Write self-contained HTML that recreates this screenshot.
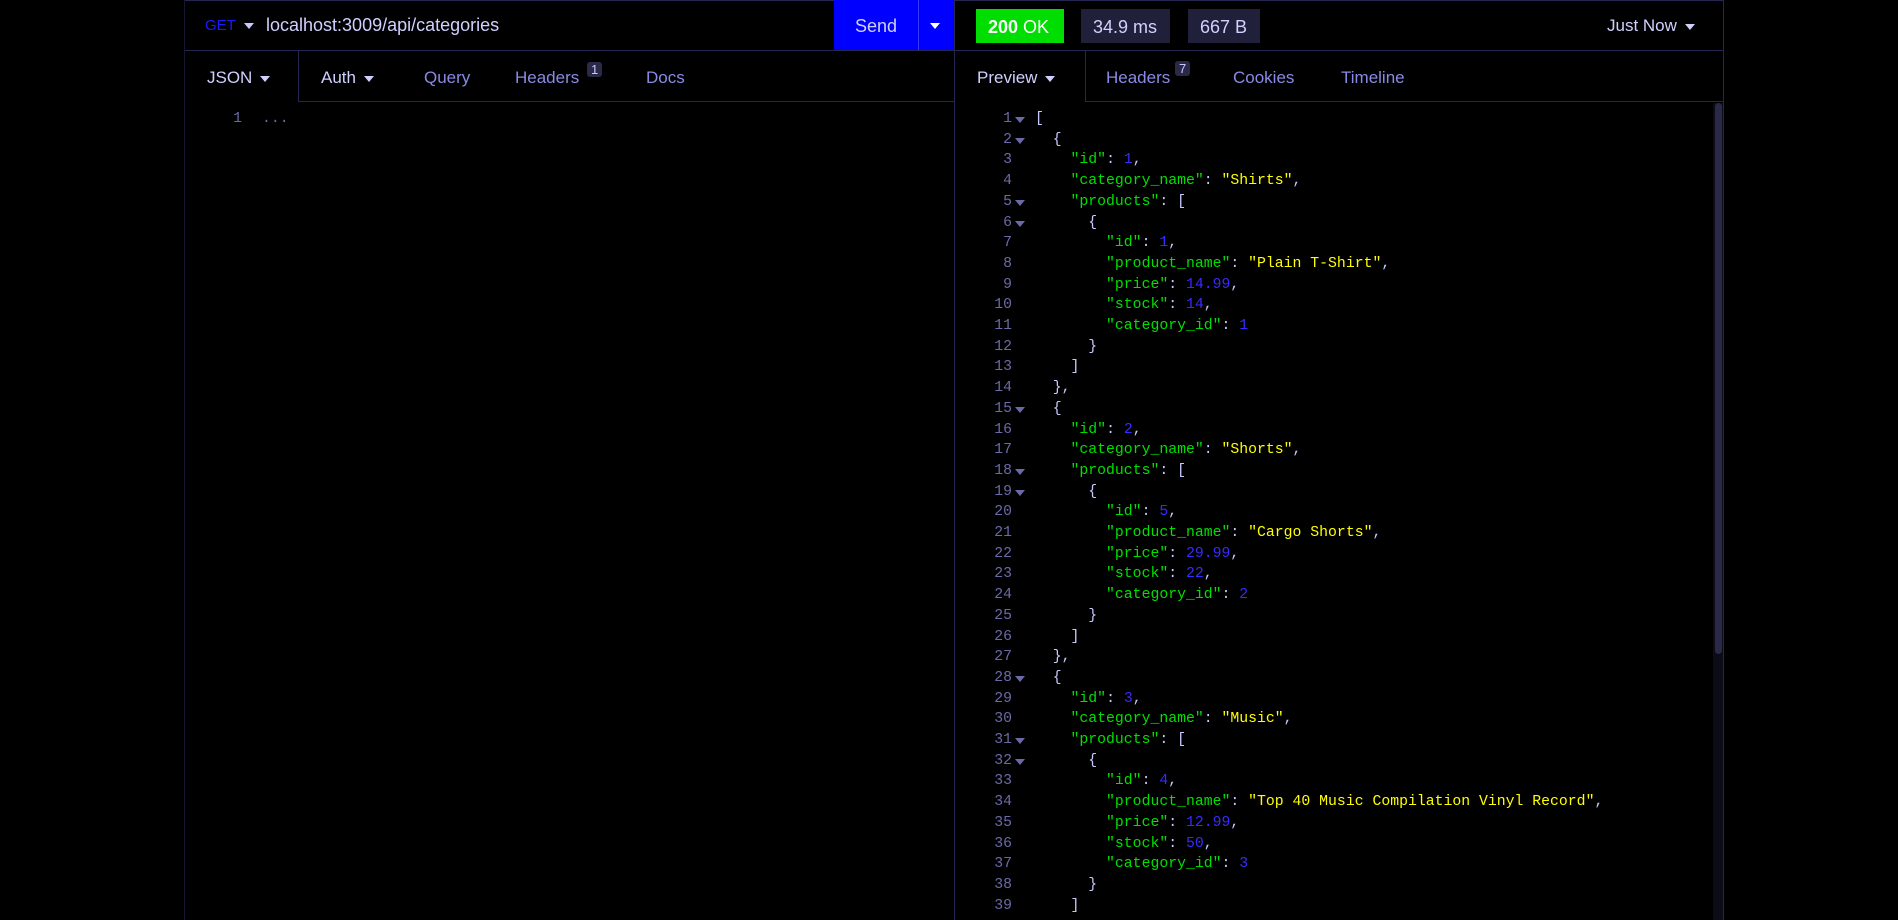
<!DOCTYPE html>
<html><head><meta charset="utf-8"><style>
*{margin:0;padding:0;box-sizing:border-box}
body{width:1898px;height:920px;background:#000;overflow:hidden;position:relative;font-family:"Liberation Sans",sans-serif;color:#c8c8ff}
.a{position:absolute;white-space:nowrap}
.sans{font-size:17px}
.tab{color:#8a8ae6;font-size:17px}
.w{color:#d0d0ff}
.tri{display:inline-block;width:0;height:0;border-left:5px solid transparent;border-right:5px solid transparent;border-top:6px solid currentColor;vertical-align:middle;margin-left:8px}
.ln{position:absolute;left:960px;width:52px;text-align:right;color:#6a6aa8;font-family:"Liberation Mono",monospace;font-size:14.8px}
.ar{position:absolute;left:1015px;width:0;height:0;border-left:5px solid transparent;border-right:5px solid transparent;border-top:6px solid #6a6aa8}
.code{position:absolute;left:1035px;font-family:"Liberation Mono",monospace;font-size:14.8px;color:#c8c8ff;white-space:pre}
.k{color:#00e000}.s{color:#ffff00}.n{color:#3a2aff}
.badge{background:#2a2a48;border-radius:3px;font-size:13px;color:#c8c8ff;padding:0 4px;position:absolute}
</style></head><body>
<div class="a" style="left:184px;top:0;width:1540px;height:1px;background:#262650"></div>
<div class="a" style="left:184px;top:50px;width:1540px;height:1px;background:#262650"></div>
<div class="a" style="left:298px;top:101px;width:656px;height:1px;background:#262650"></div>
<div class="a" style="left:1086px;top:101px;width:637px;height:1px;background:#262650"></div>
<div class="a" style="left:298px;top:50px;width:1px;height:52px;background:#262650"></div>
<div class="a" style="left:1085px;top:50px;width:1px;height:52px;background:#262650"></div>
<div class="a" style="left:954px;top:0;width:1px;height:920px;background:#262650"></div>
<div class="a" style="left:1723px;top:0;width:1px;height:920px;background:#262650"></div>
<div class="a" style="left:184px;top:0;width:1px;height:920px;background:#161630"></div>
<div class="a" style="left:205px;top:17px;color:#1a1aff;font-size:15px">GET<span class="tri" style="color:#c8c8ff"></span></div>
<div class="a sans w" style="left:266px;top:15px;font-size:18px">localhost:3009/api/categories</div>
<div class="a" style="left:834px;top:0;width:120px;height:50px;background:#0000ff"></div>
<div class="a" style="left:918px;top:0;width:1px;height:50px;background:#3a3aff"></div>
<div class="a sans" style="left:855px;top:16px;color:#d0d0ff;font-size:18px">Send</div>
<div class="a" style="left:930px;top:23px;width:0;height:0;border-left:5px solid transparent;border-right:5px solid transparent;border-top:6px solid #fff"></div>
<div class="a sans w" style="left:207px;top:68px">JSON<span class="tri"></span></div>
<div class="a sans w" style="left:321px;top:68px">Auth<span class="tri"></span></div>
<div class="a tab" style="left:424px;top:68px">Query</div>
<div class="a tab" style="left:515px;top:68px">Headers</div>
<div class="badge" style="left:587px;top:62px">1</div>
<div class="a tab" style="left:646px;top:68px">Docs</div>
<div class="a" style="left:200px;top:111px;width:42px;text-align:right;color:#6a6aa8;font-family:'Liberation Mono',monospace;font-size:14.8px">1</div>
<div class="a" style="left:262px;top:111px;color:#6a6aa8;font-family:'Liberation Mono',monospace;font-size:14.8px">...</div>
<div class="a" style="left:976px;top:9px;width:88px;height:34px;background:#00dd00"></div>
<div class="a sans" style="left:988px;top:17px;color:#fff;font-size:18px"><b>200</b> OK</div>
<div class="a" style="left:1081px;top:9px;width:89px;height:34px;background:#20203a"></div>
<div class="a sans w" style="left:1093px;top:17px;font-size:18px">34.9 ms</div>
<div class="a" style="left:1188px;top:9px;width:72px;height:34px;background:#20203a"></div>
<div class="a sans w" style="left:1200px;top:17px;font-size:18px">667 B</div>
<div class="a sans w" style="left:1607px;top:16px">Just Now<span class="tri"></span></div>
<div class="a sans w" style="left:977px;top:68px">Preview<span class="tri"></span></div>
<div class="a tab" style="left:1106px;top:68px">Headers</div>
<div class="badge" style="left:1175px;top:61px">7</div>
<div class="a tab" style="left:1233px;top:68px">Cookies</div>
<div class="a tab" style="left:1341px;top:68px">Timeline</div>
<div class="a" style="left:1713px;top:103px;width:10px;height:817px;background:#0c0c18"></div>
<div class="a" style="left:1715px;top:103px;width:7px;height:551px;background:#2a2a48;border-radius:4px"></div>
<div id="code"></div>
<script>
const lines=[
['[',1],['  {',1],['    <k>"id"</k>: <n>1</n>,'],['    <k>"category_name"</k>: <s>"Shirts"</s>,'],['    <k>"products"</k>: [',1],['      {',1],
['        <k>"id"</k>: <n>1</n>,'],['        <k>"product_name"</k>: <s>"Plain T-Shirt"</s>,'],['        <k>"price"</k>: <n>14.99</n>,'],['        <k>"stock"</k>: <n>14</n>,'],['        <k>"category_id"</k>: <n>1</n>'],['      }'],['    ]'],['  },'],
['  {',1],['    <k>"id"</k>: <n>2</n>,'],['    <k>"category_name"</k>: <s>"Shorts"</s>,'],['    <k>"products"</k>: [',1],['      {',1],
['        <k>"id"</k>: <n>5</n>,'],['        <k>"product_name"</k>: <s>"Cargo Shorts"</s>,'],['        <k>"price"</k>: <n>29.99</n>,'],['        <k>"stock"</k>: <n>22</n>,'],['        <k>"category_id"</k>: <n>2</n>'],['      }'],['    ]'],['  },'],
['  {',1],['    <k>"id"</k>: <n>3</n>,'],['    <k>"category_name"</k>: <s>"Music"</s>,'],['    <k>"products"</k>: [',1],['      {',1],
['        <k>"id"</k>: <n>4</n>,'],['        <k>"product_name"</k>: <s>"Top 40 Music Compilation Vinyl Record"</s>,'],['        <k>"price"</k>: <n>12.99</n>,'],['        <k>"stock"</k>: <n>50</n>,'],['        <k>"category_id"</k>: <n>3</n>'],['      }'],['    ]']];
let h='';
lines.forEach((l,i)=>{
 const y=111+i*20.7;
 let t=l[0].replace(/<k>/g,'<span class="k">').replace(/<\/k>/g,'</span>').replace(/<s>/g,'<span class="s">').replace(/<\/s>/g,'</span>').replace(/<n>/g,'<span class="n">').replace(/<\/n>/g,'</span>');
 h+=`<div class="ln" style="top:${y}px">${i+1}</div>`;
 if(l[1])h+=`<div class="ar" style="top:${y+6}px"></div>`;
 h+=`<div class="code" style="top:${y}px">${t}</div>`;
});
document.getElementById('code').innerHTML=h;
</script>
</body></html>
